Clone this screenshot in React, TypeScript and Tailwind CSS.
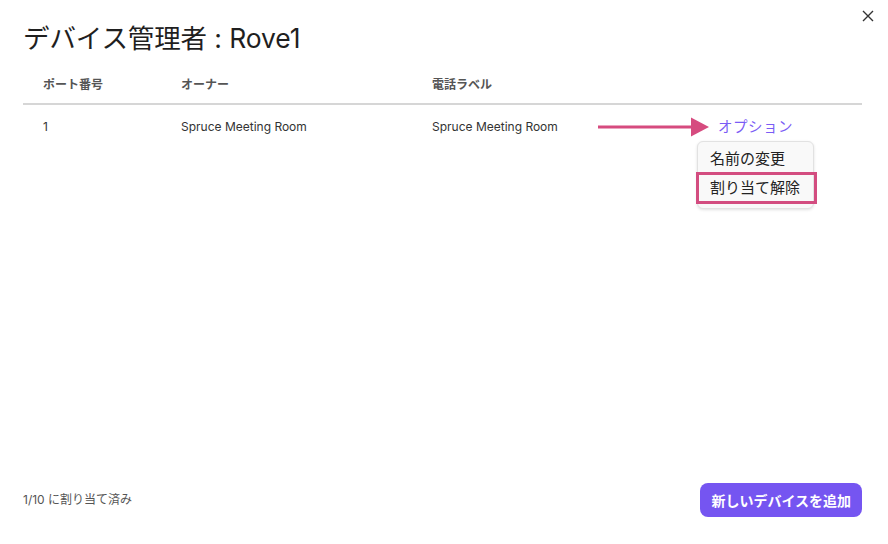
import React from "react";

const font = { fontFamily: '"Inter", "Noto Sans CJK JP", sans-serif' };

export default function App() {
  return (
    <div
      className="relative flex h-[544px] w-[888px] flex-col bg-white pl-[23px] pr-[26px] text-[#222]"
      style={font}
    >
      <button className="absolute right-[13px] top-[9px] flex h-[14px] w-[14px] items-center justify-center text-[#333]">
        <svg width="12" height="12" viewBox="0 0 12 12" fill="none" stroke="currentColor" strokeWidth="1.4">
          <path d="M1 1L11 11M11 1L1 11" />
        </svg>
      </button>

      <h1 className="mt-[21px] text-[26.5px] font-normal leading-[34px] tracking-[-0.1px] text-[#1f1f1f]">
        デバイス管理者 : Rove1
      </h1>

      <div className="mt-[22px] grid grid-cols-[138px_251px_1fr] border-b-2 border-[#d6d6d6] pb-[10px] pl-[20px] text-[12px] font-bold leading-[16px] text-[#555]">
        <span>ポート番号</span>
        <span>オーナー</span>
        <span>電話ラベル</span>
      </div>

      <div className="grid grid-cols-[138px_251px_1fr] pl-[20px] pt-[12px] text-[12px] leading-[20px] text-[#333]">
        <span>1</span>
        <span>Spruce Meeting Room</span>
        <div className="flex items-center">
          <span className="w-[166px]">Spruce Meeting Room</span>
          <div className="relative flex items-center">
            <svg width="112" height="20" viewBox="0 0 112 20" className="mr-[8px]">
              <rect x="0" y="8.5" width="96" height="3" fill="#d64b7f" />
              <path d="M93 0.5L111 10L93 19.5Z" fill="#d64b7f" />
            </svg>
            <span className="text-[14.5px] tracking-[0.5px] text-[#7b5cf5]">オプション</span>
            <div className="absolute left-[99px] top-[24px] w-[117px] rounded-[6px] border border-[#e2e2e2] bg-[#f9f9f9] py-[4px] text-[15px] text-[#222] shadow-[0_1px_3px_rgba(0,0,0,0.12)]">
              <div className="px-[12px] leading-[26px]">名前の変更</div>
              <div className="-ml-[2px] -mr-[4px] border-[3px] border-[#d34d80] pl-[11px] pr-[12px] leading-[26px]">割り当て解除</div>
            </div>
          </div>
        </div>
      </div>

      <div className="mt-auto mb-[27px] flex items-center justify-between">
        <span className="text-[12px] text-[#555]">1/10 に割り当て済み</span>
        <button className="h-[34px] rounded-[8px] bg-[#7555f1] px-[11px] text-[14px] font-bold text-white">
          新しいデバイスを追加
        </button>
      </div>
    </div>
  );
}
